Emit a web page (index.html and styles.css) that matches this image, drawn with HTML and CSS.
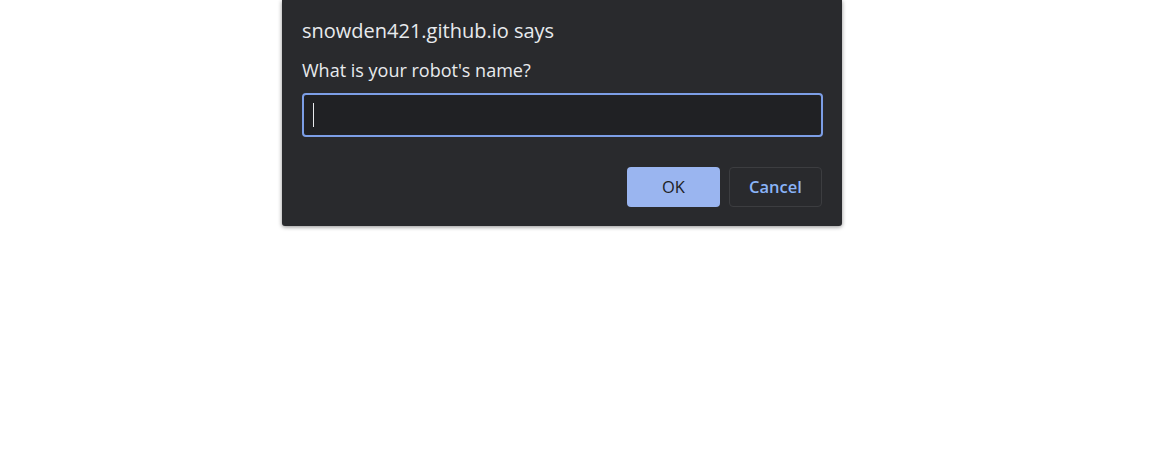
FILE: index.html
```html
<!DOCTYPE html>
<html>
<head>
<meta charset="utf-8">
<link rel="stylesheet" href="styles.css">
</head>
<body>
<div class="dialog">
  <div class="title">snowden421.github.io says</div>
  <div class="message">What is your robot's name?</div>
  <div class="field"><span class="caret"></span></div>
  <div class="actions">
    <button class="btn ok">OK</button>
    <button class="btn cancel">Cancel</button>
  </div>
</div>
</body>
</html>
```
FILE: styles.css
```css
html, body {
  margin: 0;
  padding: 0;
  background: #ffffff;
  width: 1176px;
  height: 473px;
  overflow: hidden;
}
.dialog {
  margin-left: 282px;
  width: 560px;
  height: 226px;
  box-sizing: border-box;
  background: #292a2d;
  border-radius: 0 0 3px 3px;
  box-shadow: 0 1px 4px rgba(0,0,0,0.45);
  padding: 18px 19px 0 20px;
  display: flex;
  flex-direction: column;
  font-family: "Open Sans", "Noto Sans", sans-serif;
  color: #e8eaed;
}
.title {
  font-size: 20px;
  line-height: 26px;
}
.message {
  margin-top: 15px;
  font-size: 18px;
  line-height: 22px;
}
.field {
  margin-top: 12px;
  height: 44px;
  box-sizing: border-box;
  border: 2px solid #7c9ee6;
  border-radius: 4px;
  background: #202124;
  display: flex;
  align-items: center;
  padding-left: 9px;
}
.caret {
  width: 1px;
  height: 24px;
  background: #e8eaed;
}
.actions {
  margin-top: 30px;
  display: flex;
  justify-content: flex-end;
  gap: 9px;
  padding-right: 1px;
}
.btn {
  width: 93px;
  height: 40px;
  border-radius: 4px;
  font-family: "Open Sans", "Noto Sans", sans-serif;
  font-size: 16.5px;
  line-height: 38px;
  padding: 0;
}
.ok {
  background: #9ab5f0;
  border: none;
  color: #202124;
}
.cancel {
  background: #292a2d;
  border: 1px solid #3c3d40;
  color: #8ab4f8;
  font-weight: 600;
}
```
